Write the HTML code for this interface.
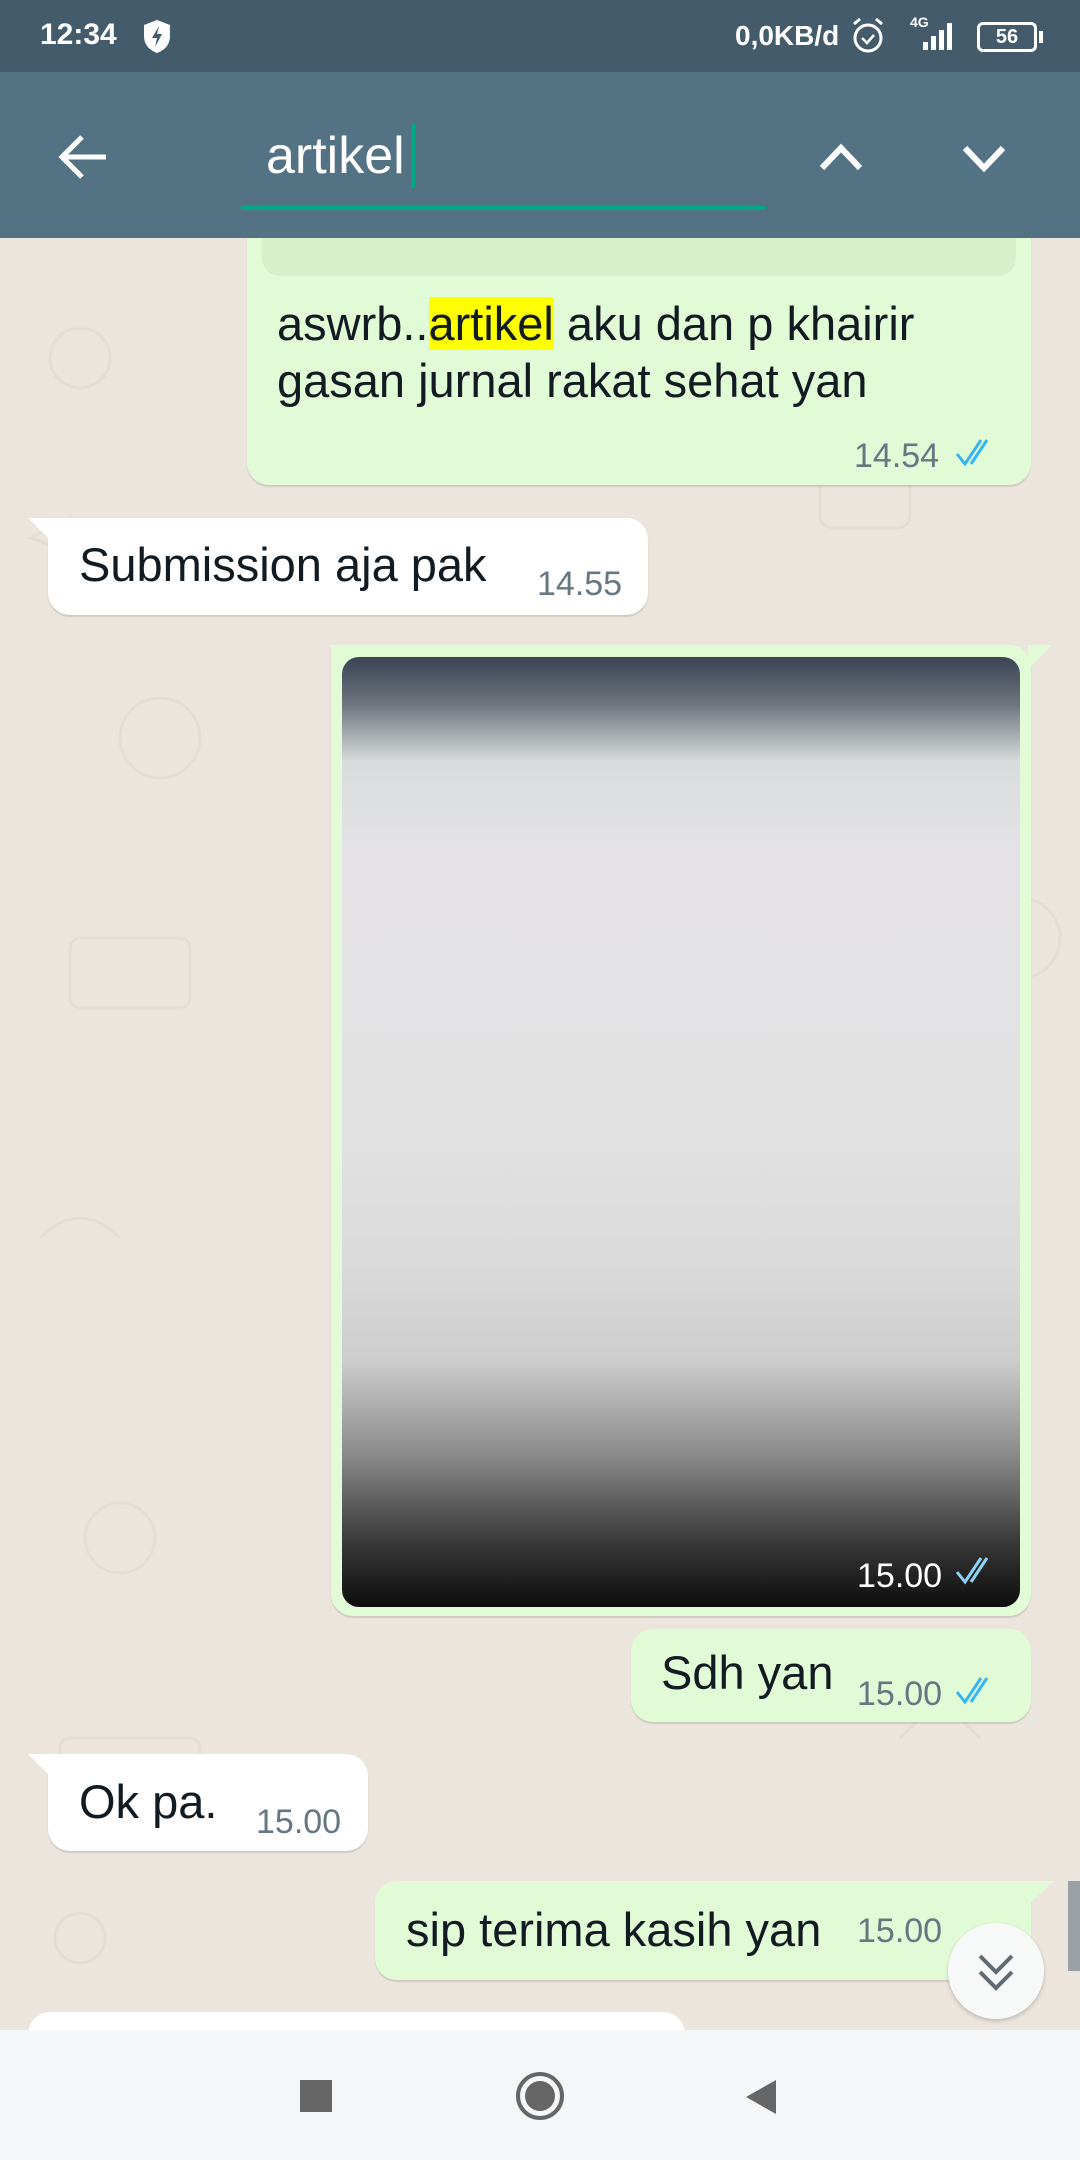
<!DOCTYPE html>
<html><head><meta charset="utf-8"><style>
*{margin:0;padding:0;box-sizing:border-box}
body{width:1080px;height:2160px;overflow:hidden;position:relative;background:#ece5dd;font-family:"Liberation Sans",sans-serif;color:#111b21}
.abs{position:absolute}
.status{left:0;top:0;width:1080px;height:72px;background:#435b6b;color:#fff;font-size:30px;z-index:10}
.tool{left:0;top:72px;width:1080px;height:166px;background:#537385;z-index:10}
.b{position:absolute;border-radius:22px;box-shadow:0 2px 1px rgba(0,0,0,.12)}
.out{background:#e2fbd7}
.in{background:#fff}
.t{position:absolute;font-size:47px;white-space:nowrap}
.tm{position:absolute;font-size:34px;color:#667781;white-space:nowrap}
.nav{left:0;top:2030px;width:1080px;height:130px;background:#f6f7f9;z-index:5}
</style></head><body>
<svg class="abs" style="left:0;top:238px" width="1080" height="1792" opacity="0.35">
<g fill="none" stroke="#d8cfc4" stroke-width="3">
<circle cx="80" cy="120" r="30"/><path d="M30 300 l40 -20 l20 40 z"/><circle cx="160" cy="500" r="40"/>
<rect x="70" y="700" width="120" height="70" rx="10"/><path d="M40 1000 q40 -40 80 0"/><circle cx="120" cy="1300" r="35"/>
<rect x="820" y="200" width="90" height="90" rx="12"/><circle cx="1020" cy="700" r="40"/><path d="M900 1500 l40 -40 l40 40"/>
<rect x="60" y="1500" width="140" height="90" rx="10"/><circle cx="80" cy="1700" r="25"/>
</g></svg>
<div class="abs status">
<div class="abs" style="left:40px;top:18px;font-weight:bold">12:34</div>
<svg class="abs" style="left:142px;top:18px" width="30" height="36"><path d="M15 2 L28 7 V18 Q28 30 15 35 Q2 30 2 18 V7 Z" fill="#fff"/><path d="M17 8 L10 20 H15 L13 29 L20 16 H15 Z" fill="#435b6b"/></svg>
<div class="abs" style="left:735px;top:20px;font-weight:bold;font-size:28px">0,0KB/d</div>
<svg class="abs" style="left:850px;top:16px" width="36" height="40"><circle cx="18" cy="22" r="13" fill="none" stroke="#fff" stroke-width="3"/><path d="M12 22 l5 5 l7 -8" stroke="#fff" stroke-width="2.5" fill="none"/><path d="M4 8 l6 -5 M32 8 l-6 -5" stroke="#fff" stroke-width="3"/></svg>
<div class="abs" style="left:910px;top:14px;font-size:14px;font-weight:bold">4G</div>
<svg class="abs" style="left:905px;top:20px" width="60" height="32"><rect x="18" y="22" width="5" height="8" fill="#fff"/><rect x="26" y="16" width="5" height="14" fill="#fff"/><rect x="34" y="10" width="5" height="20" fill="#fff"/><rect x="42" y="3" width="5" height="27" fill="#fff"/></svg>
<div class="abs" style="left:977px;top:22px;width:60px;height:30px;border:3px solid #fff;border-radius:6px;font-size:20px;font-weight:bold;text-align:center;line-height:24px;color:#fff">56</div>
<div class="abs" style="left:1039px;top:31px;width:4px;height:12px;background:#fff"></div>
</div>
<div class="abs tool">
<svg class="abs" style="left:56px;top:60px" width="56" height="50"><path d="M50 25 H8 M26 5 L6 25 L26 45" stroke="#fff" stroke-width="5" fill="none"/></svg>
<div class="abs" style="left:266px;top:54px;font-size:52px;color:#fff">artikel</div>
<div class="abs" style="left:411px;top:52px;width:4px;height:64px;background:#00a884"></div>
<div class="abs" style="left:241px;top:134px;width:525px;height:4px;background:#00a884"></div>
<svg class="abs" style="left:818px;top:66px" width="46" height="40"><path d="M4 30 L23 10 L42 30" stroke="#fff" stroke-width="6" fill="none"/></svg>
<svg class="abs" style="left:961px;top:66px" width="46" height="40"><path d="M4 10 L23 30 L42 10" stroke="#fff" stroke-width="6" fill="none"/></svg>
</div>
<!-- bubble 1 -->
<div class="b out" style="left:247px;top:200px;width:784px;height:285px;border-radius:0 0 22px 22px"></div>
<div class="abs" style="left:262px;top:230px;width:754px;height:46px;background:#d6f0c9;border-radius:0 0 18px 18px"></div>
<div class="t" style="left:277px;top:296px">aswrb..<span style="background:#ffff00">artikel</span> aku dan p khairir</div>
<div class="t" style="left:277px;top:353px">gasan jurnal rakat sehat yan</div>
<div class="tm" style="left:854px;top:437px">14.54</div>
<svg class="abs" style="left:955px;top:438px" width="46" height="30"><path d="M2 16 l8 10 l16 -24 M16 26 l16 -24" stroke="#34b7f1" stroke-width="3" fill="none"/></svg>
<!-- bubble 2 -->
<div class="b in" style="left:48px;top:518px;width:600px;height:97px;border-radius:0 22px 22px 22px"></div>
<svg class="abs" style="left:28px;top:518px" width="24" height="24"><path d="M0 0 H24 V24 Z" fill="#fff"/></svg>
<div class="t" style="left:79px;top:537px">Submission aja pak</div>
<div class="tm" style="left:537px;top:565px">14.55</div>
<!-- image -->
<div class="b out" style="left:331px;top:645px;width:700px;height:971px;border-radius:0 22px 22px 22px"></div>
<svg class="abs" style="left:1028px;top:645px" width="24" height="24"><path d="M0 0 H24 L0 24 Z" fill="#e2fbd7"/></svg>
<div class="abs" style="left:342px;top:657px;width:678px;height:950px;border-radius:17px;background:linear-gradient(180deg,#3c4354 0%,#6e757e 5%,#d8dcdc 11%,#e4e2e6 20%,#e2e2e2 50%,#d9d9d9 65%,#cdcdcd 74%,#8a8a8a 84%,#3a3a3a 93%,#0d0d0d 100%)"></div>
<div class="tm" style="left:857px;top:1557px;color:#fff">15.00</div>
<svg class="abs" style="left:955px;top:1556px" width="46" height="30"><path d="M2 16 l8 10 l16 -24 M16 26 l16 -24" stroke="#8fd3f7" stroke-width="3" fill="none"/></svg>
<!-- Sdh yan -->
<div class="b out" style="left:631px;top:1629px;width:400px;height:93px"></div>
<div class="t" style="left:661px;top:1645px">Sdh yan</div>
<div class="tm" style="left:857px;top:1675px">15.00</div>
<svg class="abs" style="left:955px;top:1676px" width="46" height="30"><path d="M2 16 l8 10 l16 -24 M16 26 l16 -24" stroke="#34b7f1" stroke-width="3" fill="none"/></svg>
<!-- Ok pa -->
<div class="b in" style="left:48px;top:1754px;width:320px;height:97px;border-radius:0 22px 22px 22px"></div>
<svg class="abs" style="left:28px;top:1754px" width="24" height="24"><path d="M0 0 H24 V24 Z" fill="#fff"/></svg>
<div class="t" style="left:79px;top:1774px">Ok pa.</div>
<div class="tm" style="left:256px;top:1803px">15.00</div>
<!-- sip -->
<div class="b out" style="left:375px;top:1881px;width:656px;height:99px;border-radius:22px 0 22px 22px"></div>
<svg class="abs" style="left:1028px;top:1881px" width="26" height="24"><path d="M0 0 H26 L0 24 Z" fill="#e2fbd7"/></svg>
<div class="t" style="left:406px;top:1902px">sip terima kasih yan</div>
<div class="tm" style="left:857px;top:1912px">15.00</div>
<div class="abs" style="left:28px;top:2012px;width:657px;height:40px;background:#fff;border-radius:22px 22px 0 0"></div>
<div class="abs" style="left:1068px;top:1881px;width:12px;height:90px;background:#9aa0a3"></div>
<div class="abs" style="left:948px;top:1923px;width:96px;height:96px;border-radius:50%;background:#f7f8f8;box-shadow:0 2px 4px rgba(0,0,0,.2)"></div>
<svg class="abs" style="left:976px;top:1950px" width="40" height="44"><path d="M4 6 L20 22 L36 6 M4 22 L20 38 L36 22" stroke="#5f6b72" stroke-width="4" fill="none"/></svg>
<div class="abs nav"></div>
<div class="abs" style="left:300px;top:2080px;width:32px;height:32px;background:#666;z-index:6"></div>
<div class="abs" style="left:516px;top:2072px;width:48px;height:48px;border-radius:50%;border:4px solid #666;z-index:6"></div>
<div class="abs" style="left:525px;top:2081px;width:30px;height:30px;border-radius:50%;background:#666;z-index:6"></div>
<svg class="abs" style="left:744px;top:2078px;z-index:6" width="34" height="38"><path d="M32 2 V36 L2 19 Z" fill="#666"/></svg>
</body></html>
